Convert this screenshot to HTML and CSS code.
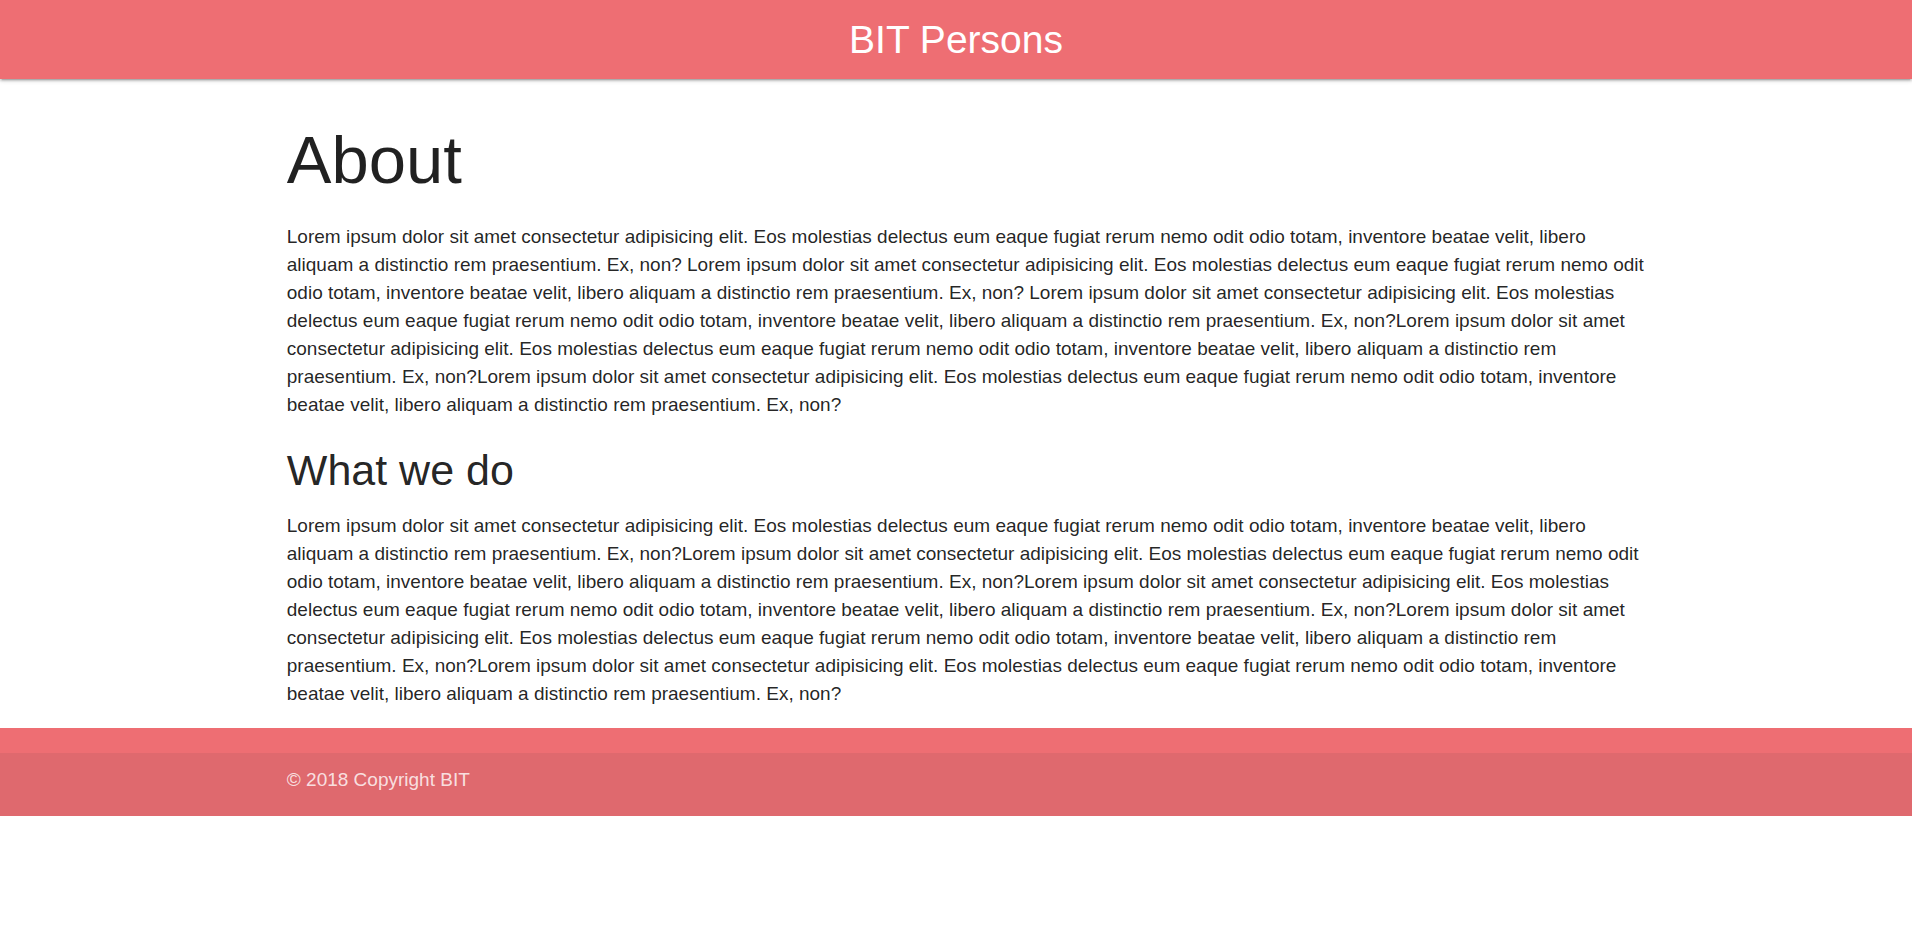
FILE: index.html
```html
<!DOCTYPE html>
<html lang="en">
<head>
<meta charset="utf-8">
<title>BIT Persons</title>
<link rel="stylesheet" href="styles.css">
</head>
<body>
<header class="navbar"><a class="brand" href="#">BIT Persons</a></header>
<main class="container">
<h1 class="title">About</h1>
<p class="text">Lorem ipsum dolor sit amet consectetur adipisicing elit. Eos molestias delectus eum eaque fugiat rerum nemo odit odio totam, inventore beatae velit, libero aliquam a distinctio rem praesentium. Ex, non? Lorem ipsum dolor sit amet consectetur adipisicing elit. Eos molestias delectus eum eaque fugiat rerum nemo odit odio totam, inventore beatae velit, libero aliquam a distinctio rem praesentium. Ex, non? Lorem ipsum dolor sit amet consectetur adipisicing elit. Eos molestias delectus eum eaque fugiat rerum nemo odit odio totam, inventore beatae velit, libero aliquam a distinctio rem praesentium. Ex, non?Lorem ipsum dolor sit amet consectetur adipisicing elit. Eos molestias delectus eum eaque fugiat rerum nemo odit odio totam, inventore beatae velit, libero aliquam a distinctio rem praesentium. Ex, non?Lorem ipsum dolor sit amet consectetur adipisicing elit. Eos molestias delectus eum eaque fugiat rerum nemo odit odio totam, inventore beatae velit, libero aliquam a distinctio rem praesentium. Ex, non?</p>
<h2 class="subtitle">What we do</h2>
<p class="text">Lorem ipsum dolor sit amet consectetur adipisicing elit. Eos molestias delectus eum eaque fugiat rerum nemo odit odio totam, inventore beatae velit, libero aliquam a distinctio rem praesentium. Ex, non?Lorem ipsum dolor sit amet consectetur adipisicing elit. Eos molestias delectus eum eaque fugiat rerum nemo odit odio totam, inventore beatae velit, libero aliquam a distinctio rem praesentium. Ex, non?Lorem ipsum dolor sit amet consectetur adipisicing elit. Eos molestias delectus eum eaque fugiat rerum nemo odit odio totam, inventore beatae velit, libero aliquam a distinctio rem praesentium. Ex, non?Lorem ipsum dolor sit amet consectetur adipisicing elit. Eos molestias delectus eum eaque fugiat rerum nemo odit odio totam, inventore beatae velit, libero aliquam a distinctio rem praesentium. Ex, non?Lorem ipsum dolor sit amet consectetur adipisicing elit. Eos molestias delectus eum eaque fugiat rerum nemo odit odio totam, inventore beatae velit, libero aliquam a distinctio rem praesentium. Ex, non?</p>
</main>
<footer class="footer">
<div class="copyright"><div class="container">© 2018 Copyright BIT</div></div>
</footer>
</body>
</html>
```

FILE: styles.css
```css
* { box-sizing: border-box; }
body {
  margin: 0;
  font-family: "Liberation Sans", Arial, sans-serif;
  font-size: 19px;
  line-height: 28px;
  color: rgba(0, 0, 0, 0.87);
  background: #fff;
}
.navbar {
  display: flex;
  justify-content: center;
  background: #ee6e73;
  box-shadow: 0 2px 2px 0 rgba(0, 0, 0, 0.14), 0 3px 1px -2px rgba(0, 0, 0, 0.12), 0 1px 5px 0 rgba(0, 0, 0, 0.2);
}
.brand {
  font-size: 39px;
  line-height: 79px;
  color: #fff;
  text-decoration: none;
}
.container {
  margin: 0 14% 0 15%;
}
.title {
  margin: 0 0 27px;
  padding-top: 45px;
  font-size: 67px;
  line-height: 72px;
  font-weight: 400;
}
.subtitle {
  margin: 27px 0 18px;
  font-size: 43px;
  line-height: 48px;
  font-weight: 400;
}
.text { margin: 0; }
.footer {
  margin-top: 20px;
  padding-top: 25px;
  background: #ee6e73;
}
.copyright {
  padding: 13px 0 22px;
  color: rgba(255, 255, 255, 0.8);
  background: rgba(51, 51, 51, 0.08);
}
```
